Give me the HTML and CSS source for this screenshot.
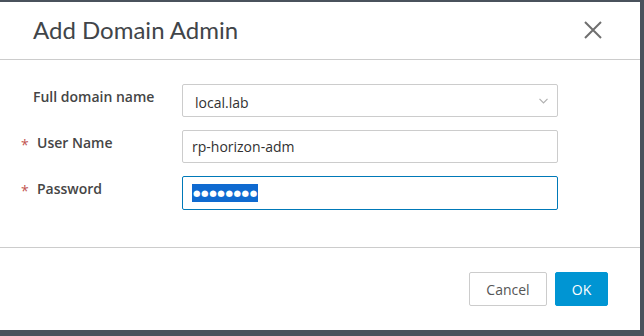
FILE: index.html
```html
<!DOCTYPE html>
<html lang="en">
<head>
    <meta charset="UTF-8" />
    <title>Add Domain Admin</title>
    <link rel="stylesheet" href="styles.css">
</head>
<body>
    <div class="modal">
        <div class="modal-header">
            <h3 class="modal-title">Add Domain Admin</h3>
            <button class="close" aria-label="Close">
                <svg width="18" height="18" viewBox="0 0 18 18">
                    <path d="M1 1 L17 17 M17 1 L1 17" stroke="#6f6f6f" stroke-width="2" fill="none"/>
                </svg>
            </button>
        </div>

        <div class="modal-body">
            <div class="form-row">
                <label class="form-label">Full domain name</label>
                <div class="field field-select">
                    <span>local.lab</span>
                    <svg class="chevron" width="9" height="6" viewBox="0 0 9 6">
                        <path d="M0.5 0.8 L4.5 4.8 L8.5 0.8" stroke="#b0b0b0" stroke-width="1.2" fill="none"/>
                    </svg>
                </div>
            </div>
            <div class="form-row">
                <label class="form-label required">User Name</label>
                <div class="field">rp-horizon-adm</div>
            </div>
            <div class="form-row">
                <label class="form-label required">Password</label>
                <div class="field field-focus"><span class="selected">&#9679;&#9679;&#9679;&#9679;&#9679;&#9679;&#9679;&#9679;</span></div>
            </div>
        </div>

        <div class="modal-footer">
            <button class="btn btn-outline">Cancel</button>
            <button class="btn btn-primary">OK</button>
        </div>
    </div>
</body>
</html>
```

FILE: styles.css
```css
body {
    margin: 0;
    height: 336px;
    background-color: #4a525c;
    font-family: "Open Sans", sans-serif;
    color: #454545;
}

.modal {
    width: 640px;
    height: 328px;
    margin-top: 2px;
    background-color: white;
    display: flex;
    flex-direction: column;
}

.modal-header {
    height: 57px;
    display: flex;
    align-items: center;
    justify-content: space-between;
    padding: 0 38px 0 33px;
    border-bottom: 1px solid #cccccc;
}

.modal-title {
    margin: 0;
    font-family: Lato, sans-serif;
    font-weight: 400;
    font-size: 24px;
    color: #414549;
    padding-bottom: 2px;
}

.close {
    background: none;
    border: none;
    padding: 0;
    width: 18px;
    height: 18px;
    display: flex;
    margin-bottom: 1px;
}

.modal-body {
    flex: 1;
    padding: 24px 82px 0 33px;
    display: flex;
    flex-direction: column;
    gap: 13px;
    border-bottom: 1px solid #cccccc;
}

.form-row {
    display: flex;
    align-items: flex-start;
}

.form-label {
    width: 149px;
    box-sizing: border-box;
    font-size: 14px;
    font-weight: 600;
    color: #454545;
    padding-top: 3px;
    position: relative;
}

.required {
    padding-left: 4px;
}

.required::before {
    content: "*";
    position: absolute;
    left: -12px;
    top: 5px;
    color: #c25450;
    font-weight: 400;
}

.field {
    flex: 1;
    height: 31px;
    border: 1px solid #cccccc;
    border-radius: 2px;
    font-size: 14px;
    color: #313131;
    display: flex;
    align-items: center;
    padding: 0 9px;
}

.field-select {
    justify-content: space-between;
    padding-left: 12px;
}

.field-select span {
    padding-top: 3px;
}

.field-focus {
    height: 32px;
    border-color: #0079b8;
}

.selected {
    background-color: #0f6ad0;
    color: white;
    font-family: "DejaVu Sans", sans-serif;
    font-size: 8.6px;
    letter-spacing: 0.6px;
    line-height: 18px;
    padding: 0 0 0 1px;
}

.modal-footer {
    height: 82px;
    display: flex;
    justify-content: flex-end;
    align-items: flex-start;
    gap: 8px;
    padding: 24px 32px 0 0;
    box-sizing: border-box;
}

.btn {
    height: 34px;
    font-family: "Open Sans", sans-serif;
    font-size: 14px;
    border-radius: 2px;
    cursor: pointer;
}

.btn-outline {
    width: 78px;
    background-color: white;
    border: 1px solid #cccccc;
    color: #565656;
}

.btn-primary {
    width: 53px;
    background-color: #0095d3;
    border: 1px solid #0095d3;
    color: white;
}
```
